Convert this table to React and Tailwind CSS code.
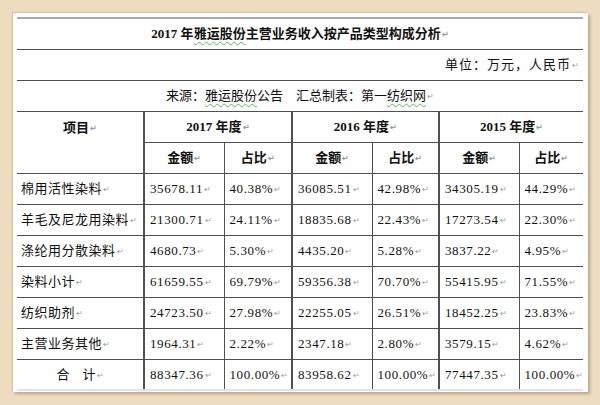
import React from "react";

const P = () => <span className="text-[8px] text-[#9a9a9a] ml-[1px] align-middle">↵</span>;

const W = ({ children }) => (
  <span className="underline decoration-wavy decoration-[#5cb85c] underline-offset-[3px] decoration-1">{children}</span>
);

const rows = [
  ["棉用活性染料", "35678.11", "40.38%", "36085.51", "42.98%", "34305.19", "44.29%"],
  ["羊毛及尼龙用染料", "21300.71", "24.11%", "18835.68", "22.43%", "17273.54", "22.30%"],
  ["涤纶用分散染料", "4680.73", "5.30%", "4435.20", "5.28%", "3837.22", "4.95%"],
  ["染料小计", "61659.55", "69.79%", "59356.38", "70.70%", "55415.95", "71.55%"],
  ["纺织助剂", "24723.50", "27.98%", "22255.05", "26.51%", "18452.25", "23.83%"],
  ["主营业务其他", "1964.31", "2.22%", "2347.18", "2.80%", "3579.15", "4.62%"],
];

const bd = "border-[#505050]";

export default function App() {
  return (
    <div
      className="w-[600px] h-[405px] pt-[13px] pl-[13px] bg-[#eedcc1] text-[#111] text-[13px] leading-none"
      style={{ fontFamily: '"Liberation Serif", "Noto Sans CJK SC", serif' }}
    >
      <div className="w-[575px] h-[379px] bg-white p-[4px] shadow-[2px_2px_3px_rgba(90,60,20,0.35),-1px_-1px_1px_rgba(150,130,100,0.25)]">
        <table className="w-[566px] table-fixed border-collapse">
          <colgroup>
            <col className="w-[127px]" />
            <col className="w-[80px]" />
            <col className="w-[68px]" />
            <col className="w-[80px]" />
            <col className="w-[67px]" />
            <col className="w-[80px]" />
            <col className="w-[64px]" />
          </colgroup>
          <tbody>
            <tr className="h-[31px]">
              <td colSpan={7} className={`border-t-2 border-t-[#a8a8a8] border-b ${bd} text-center font-bold p-0`}>
                2017 年<W>雅运股份</W>主营业务收入按产品类型构成分析<P />
              </td>
            </tr>
            <tr className="h-[31px]">
              <td colSpan={7} className={`border-b ${bd} text-right pr-[3px] tracking-[1px]`}>
                单位：万元，人民币<P />
              </td>
            </tr>
            <tr className="h-[31px]">
              <td colSpan={7} className={`border-b ${bd} text-center`}>
                来源：<W>雅运股份</W>公告&nbsp;&nbsp;&nbsp;&nbsp;汇总制表：第一<W>纺织网</W><P />
              </td>
            </tr>
            <tr className="h-[31px]">
              <td rowSpan={2} className={`border-r-2 ${bd} border-b align-top text-center font-bold pt-[9px]`}>
                项目<P />
              </td>
              <td colSpan={2} className={`border-r-2 ${bd} border-b text-center font-bold`}>
                2017 年度<P />
              </td>
              <td colSpan={2} className={`border-r-2 ${bd} border-b text-center font-bold`}>
                2016 年度<P />
              </td>
              <td colSpan={2} className={`border-b ${bd} text-center font-bold`}>
                2015 年度<P />
              </td>
            </tr>
            <tr className="h-[31px]">
              {["金额", "占比", "金额", "占比", "金额", "占比"].map((t, i) => (
                <td
                  key={i}
                  className={`border-b ${bd} ${i < 5 ? (i % 2 === 1 ? "border-r-2" : "border-r") : ""} text-center font-bold`}
                >
                  {t}
                  <P />
                </td>
              ))}
            </tr>
            {rows.map((r, ri) => (
              <tr key={ri} className="h-[31px]">
                {r.map((c, ci) => (
                  <td
                    key={ci}
                    className={`border-b ${bd} ${ci === 0 ? "border-r-2 pl-[4px] tracking-[0.5px]" : ci < 6 ? (ci % 2 === 0 ? "border-r-2 pl-[5px] tracking-[0.6px]" : "border-r pl-[5px] tracking-[0.6px]") : "pl-[5px] tracking-[0.6px]"}`}
                  >
                    {c}
                    <P />
                  </td>
                ))}
              </tr>
            ))}
            <tr className="h-[31px]">
              {["合　计", "88347.36", "100.00%", "83958.62", "100.00%", "77447.35", "100.00%"].map((c, ci) => (
                <td
                  key={ci}
                  className={`border-b-2 border-b-[#e2e2e2] ${bd} ${ci === 0 ? "border-r-2 text-center" : ci < 6 ? (ci % 2 === 0 ? "border-r-2 pl-[5px] tracking-[0.6px]" : "border-r pl-[5px] tracking-[0.6px]") : "pl-[5px] tracking-[0.6px]"}`}
                >
                  {c}
                  <P />
                </td>
              ))}
            </tr>
          </tbody>
        </table>
      </div>
    </div>
  );
}
